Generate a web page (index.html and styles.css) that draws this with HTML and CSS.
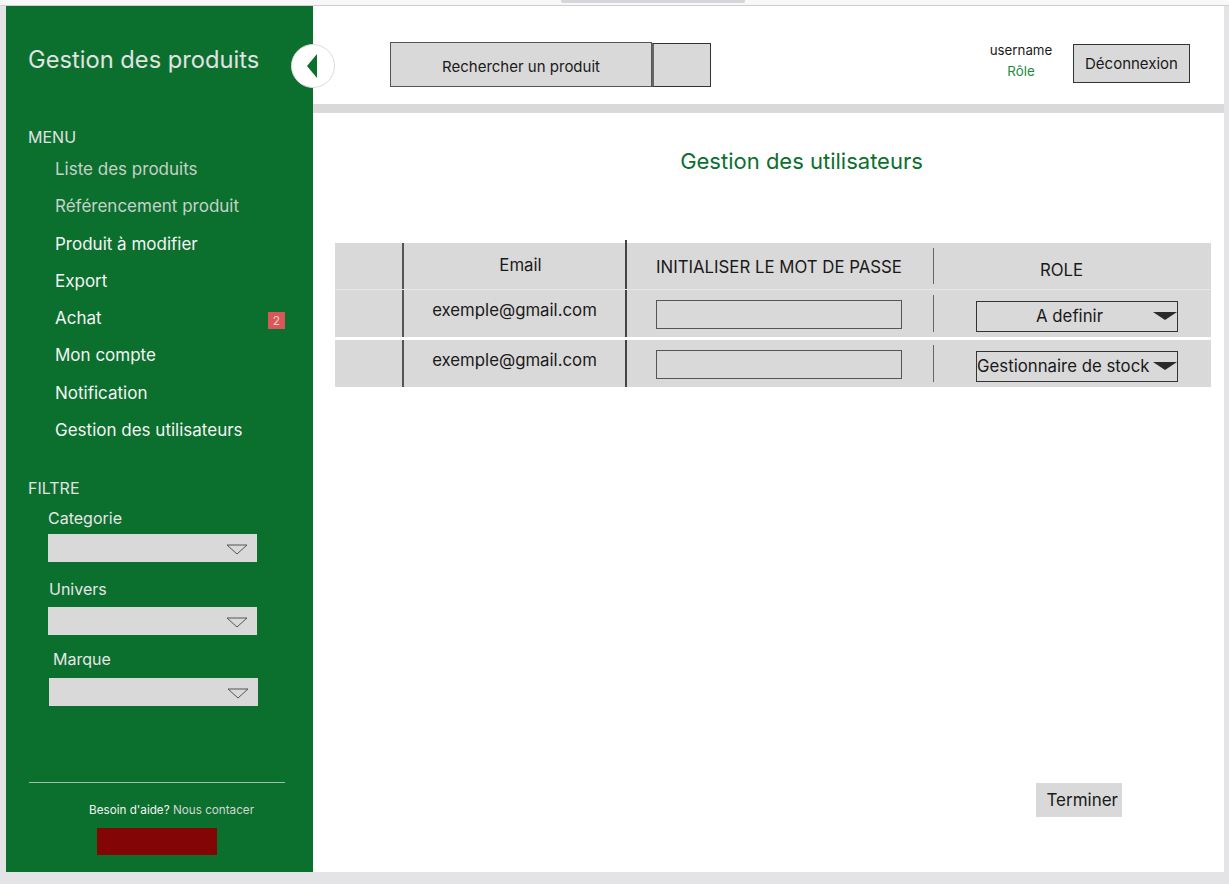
FILE: index.html
```html
<!DOCTYPE html>
<html lang="fr">
<head>
<meta charset="utf-8">
<title>Gestion des utilisateurs</title>
<link rel="stylesheet" href="styles.css">
</head>
<body>
<div class="topstrip"><div class="tab"></div></div>
<div class="frame">
  <aside class="sidebar">
    <h1 class="brand">Gestion des produits</h1>
    <button class="toggle" aria-label="Réduire">
      <svg width="12" height="24" viewBox="0 0 12 24"><polygon points="11,0 11,24 1,12" fill="#0b6f2e"/></svg>
    </button>
    <div class="section-title menu-title">MENU</div>
    <ul class="menu">
      <li class="muted">Liste des produits</li>
      <li class="muted">Référencement produit</li>
      <li>Produit à modifier</li>
      <li>Export</li>
      <li class="with-badge">Achat <span class="badge">2</span></li>
      <li>Mon compte</li>
      <li>Notification</li>
      <li>Gestion des utilisateurs</li>
    </ul>
    <div class="section-title filter-title">FILTRE</div>
    <div class="filter f1">
      <label class="flabel">Categorie</label>
      <div class="fselect"><svg width="22" height="11" viewBox="0 0 22 11"><polygon points="1,1 21,1 11,10" fill="none" stroke="#555" stroke-width="1"/></svg></div>
    </div>
    <div class="filter f2">
      <label class="flabel">Univers</label>
      <div class="fselect"><svg width="22" height="11" viewBox="0 0 22 11"><polygon points="1,1 21,1 11,10" fill="none" stroke="#555" stroke-width="1"/></svg></div>
    </div>
    <div class="filter f3">
      <label class="flabel">Marque</label>
      <div class="fselect"><svg width="22" height="11" viewBox="0 0 22 11"><polygon points="1,1 21,1 11,10" fill="none" stroke="#555" stroke-width="1"/></svg></div>
    </div>
    <div class="side-footer">
      <div class="sep"></div>
      <p class="help">Besoin d'aide? <span class="contact">Nous contacer</span></p>
      <div class="redbox"></div>
    </div>
  </aside>
  <main class="main">
    <header class="topbar">
      <div class="search">
        <button class="search-btn">Rechercher un produit</button>
        <div class="search-side"></div>
      </div>
      <div class="user">
        <div class="uname">username</div>
        <div class="urole">Rôle</div>
      </div>
      <button class="logout">Déconnexion</button>
    </header>
    <div class="band"></div>
    <section class="content">
      <h2 class="page-title">Gestion des utilisateurs</h2>
      <div class="table">
        <div class="row head">
          <div class="cell c1"></div>
          <div class="cell c2 h-email">Email</div>
          <div class="cell c3 h-pass">INITIALISER LE MOT DE PASSE</div>
          <div class="cell c4 h-role">ROLE</div>
        </div>
        <div class="row r1">
          <div class="cell c1"></div>
          <div class="cell c2 email">exemple@gmail.com</div>
          <div class="cell c3"><div class="pinput"></div></div>
          <div class="cell c4"><div class="rselect center">A definir<span class="caret"></span></div></div>
        </div>
        <div class="row r2">
          <div class="cell c1"></div>
          <div class="cell c2 email">exemple@gmail.com</div>
          <div class="cell c3"><div class="pinput"></div></div>
          <div class="cell c4"><div class="rselect left">Gestionnaire de stock<span class="caret"></span></div></div>
        </div>
      </div>
      <button class="finish">Terminer</button>
    </section>
  </main>
</div>
</body>
</html>
```
FILE: styles.css
```css
* { box-sizing: border-box; }
html, body { margin: 0; padding: 0; }
body {
  background: #e4e4e6;
  font-family: Inter, "Noto Sans", "Liberation Sans", sans-serif;
  color: #1a1a1a;
  width: 1229px;
  height: 884px;
  overflow: hidden;
}
.topstrip {
  height: 6px;
  background: #f8f8f8;
  border-bottom: 1px solid #cfcfd2;
}
.tab {
  margin-left: 561px;
  width: 184px;
  height: 3px;
  background: #d5d5da;
  border-radius: 0 0 2px 2px;
}
.frame {
  display: flex;
  margin-left: 6px;
  width: 1218px;
  height: 866px;
}
/* Sidebar */
.sidebar {
  position: relative;
  width: 307px;
  flex: none;
  background: #0b6f2e;
  display: flex;
  flex-direction: column;
  color: #f2f2f2;
}
.brand {
  margin: 39px 0 0 22px;
  font-size: 23.7px;
  line-height: 30px;
  font-weight: 400;
  color: #e2e2e2;
}
.toggle {
  position: absolute;
  top: 38px;
  right: -22px;
  width: 44px;
  height: 44px;
  border-radius: 50%;
  background: #fff;
  border: 1px solid #dcdcdc;
  padding: 0 3px 0 0;
  display: flex;
  align-items: center;
  justify-content: center;
  z-index: 2;
}
.section-title {
  font-size: 16px;
  line-height: 20px;
  color: #e2e2e2;
  margin-left: 22px;
}
.menu-title { margin-top: 52px; }
.menu {
  list-style: none;
  margin: 4px 0 0 0;
  padding: 0 0 0 49px;
}
.menu li {
  height: 37.3px;
  line-height: 37.3px;
  font-size: 17px;
  color: #f4f4f4;
  display: flex;
  align-items: center;
}
.menu li.muted { color: #c6d2c8; }
.badge {
  margin-left: auto;
  margin-right: 28px;
  width: 17px;
  height: 17px;
  line-height: 17px;
  background: #d9575a;
  color: #f0d0d0;
  font-size: 12px;
  text-align: center;
  margin-top: 4px;
}
.filter-title { margin-top: 29px; }
.filter { margin-left: 42px; width: 209px; }
.flabel {
  display: block;
  font-size: 16px;
  line-height: 20px;
  color: #e6e6e6;
}
.f1 { margin-top: 10px; }
.f1 .flabel { margin-bottom: 6px; }
.f2 { margin-top: 17px; margin-left: 42px; }
.f2 .flabel { margin-left: 1px; margin-bottom: 8px; }
.f3 { margin-top: 14px; margin-left: 43px; }
.f3 .flabel { margin-left: 4px; margin-bottom: 9px; }
.fselect {
  height: 28px;
  background: #d9d9d9;
  display: flex;
  align-items: center;
  justify-content: flex-end;
  padding: 2px 9px 0 0;
}
.side-footer {
  margin-top: auto;
  padding-bottom: 17px;
}
.sep {
  margin: 0 0 0 23px;
  width: 256px;
  height: 1px;
  background: #9fc0a8;
}
.help {
  margin: 19px 0 0 83px;
  font-size: 11.7px;
  line-height: 16px;
  color: #f4f4f4;
}
.contact { color: #cfd8d0; }
.redbox {
  margin: 10px 0 0 91px;
  width: 120px;
  height: 27px;
  background: #830505;
}
/* Main */
.main {
  flex: 1;
  background: #fff;
  display: flex;
  flex-direction: column;
  min-width: 0;
}
.topbar {
  height: 98px;
  display: flex;
  align-items: flex-start;
  padding: 0 34px 0 77px;
}
.search {
  display: flex;
  margin-top: 36px;
}
.search-btn {
  width: 262px;
  height: 45px;
  background: #d9d9d9;
  border: 1px solid #555;
  font-family: inherit;
  font-size: 15px;
  color: #1a1a1a;
  padding: 3px 0 0 0;
}
.search-side {
  width: 59px;
  height: 44px;
  margin-top: 1px;
  background: #d9d9d9;
  border: 1px solid #333;
  border-left-width: 2px;
  border-left-color: #666;
}
.user {
  margin-left: auto;
  margin-top: 36px;
  text-align: center;
  width: 64px;
}
.uname { font-size: 13.3px; line-height: 16px; color: #1a1a1a; }
.urole { font-size: 13.3px; line-height: 16px; color: #1e8a40; margin-top: 5px; }
.logout {
  margin-left: 20px;
  margin-top: 38px;
  width: 117px;
  height: 39px;
  background: #d9d9d9;
  border: 1px solid #333;
  font-family: inherit;
  font-size: 15px;
  color: #1a1a1a;
  padding: 0;
}
.band { height: 9px; background: #d9d9d9; }
.content {
  flex: 1;
  display: flex;
  flex-direction: column;
}
.page-title {
  margin: 34px 0 0 0;
  text-align: center;
  font-size: 22px;
  line-height: 28px;
  font-weight: 400;
  color: #0b6f2e;
  padding-left: 66px;
}
.table {
  margin: 68px 0 0 22px;
  width: 876px;
}
.row {
  display: grid;
  grid-template-columns: 67px 223px 309px 277px;
  background: #d9d9d9;
  height: 47px;
}
.row.head { height: 47px; border-bottom: 1px solid #e6e6e6; }
.row.r1 { height: 47px; }
.row.r2 { margin-top: 3px; height: 47px; }
.cell {
  position: relative;
  font-size: 16.8px;
  color: #1a1a1a;
}
.c2 { border-left: 2px solid #555; text-align: center; }
.c3 { border-left: 2px solid #444; }
.c4::before {
  content: "";
  position: absolute;
  left: -1px;
  top: 5px;
  bottom: 5px;
  width: 1px;
  background: #666;
}
.head .c3 { margin-top: -3px; }
.h-email { padding: 12px 0 0 12px; line-height: 20px; }
.h-pass { padding: 14px 0 0 29px; line-height: 20px; }
.head .c3.h-pass { padding-top: 17px; }
.h-role { text-align: center; padding: 17px 22px 0 0; line-height: 20px; }
.email { padding-top: 10px; line-height: 20px; }
.pinput {
  margin: 10px 0 0 29px;
  width: 246px;
  height: 29px;
  border: 1px solid #555;
  background: #d9d9d9;
}
.rselect {
  position: relative;
  margin: 11px 0 0 42px;
  width: 202px;
  height: 31px;
  border: 1px solid #333;
  background: #d9d9d9;
  font-size: 16.8px;
  line-height: 28px;
  white-space: nowrap;
}
.rselect.center { text-align: center; padding-right: 15px; }
.rselect.left { text-align: left; padding-left: 0; }
.caret {
  position: absolute;
  right: 0;
  top: 10px;
  width: 0;
  height: 0;
  border-left: 12px solid transparent;
  border-right: 12px solid transparent;
  border-top: 8px solid #2a2a2a;
}
.finish {
  margin: auto 102px 55px auto;
  width: 86px;
  height: 34px;
  background: #d9d9d9;
  border: none;
  font-family: inherit;
  font-size: 17px;
  color: #1a1a1a;
  text-align: right;
  padding: 0 4px 0 0;
}
```
